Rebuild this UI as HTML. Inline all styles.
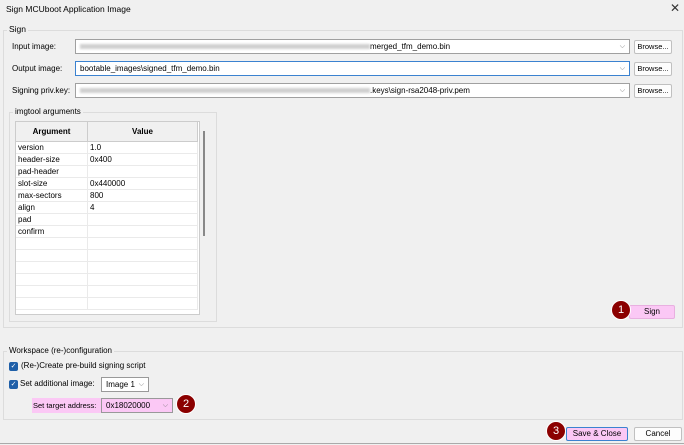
<!DOCTYPE html><html><head><style>
body{margin:0;width:684px;height:445px;background:#f0f0f0;font-family:"Liberation Sans",sans-serif;font-size:8px;color:#000;position:relative;overflow:hidden}
.a{position:absolute}
.box{position:absolute;border:1px solid #dcdcdc}
.lbl{position:absolute;background:#f0f0f0;padding:0 2px}
.field{position:absolute;background:#fff;border:1px solid #a0a0a0;height:13px;line-height:13px;padding-left:4px;white-space:nowrap;overflow:hidden;box-sizing:border-box;height:15px}
.blur{display:inline-block;height:5px;background:#d0d0d0;vertical-align:middle;filter:blur(1px)}
.btn{position:absolute;background:#fdfdfd;border:1px solid #c0c0c0;border-radius:2px;text-align:center;line-height:12px;height:12px;white-space:nowrap}
.dd{position:absolute;right:4px;top:0;color:#777;font-size:7px}
.circ{position:absolute;width:18px;height:18px;border-radius:50%;background:#8b0000;color:#fff;text-align:center;line-height:18px;font-size:11px;border:1px solid #fff}
table{border-collapse:collapse}
td{border:1px solid #eaeaea;height:11px;padding:0 2px;font-size:8px;line-height:11px}
.cb{position:absolute;width:9px;height:9px;background:#1f5fa8;border-radius:2px;color:#fff;font-size:7px;line-height:9px;text-align:center}
</style></head><body>
<div class="a" style="left:6px;top:4px;font-size:8.5px">Sign MCUboot Application Image</div>
<div class="a" style="left:670px;top:1px;font-size:12px;color:#333">✕</div>
<div class="box" style="left:3px;top:30px;width:678px;height:296px"></div>
<div class="lbl" style="left:7px;top:24px;font-size:8.5px">Sign</div>
<div class="a" style="left:12px;top:42px">Input image:</div>
<div class="a" style="left:12px;top:64px">Output image:</div>
<div class="a" style="left:12px;top:86px">Signing priv.key:</div>
<div class="field" style="left:75px;top:39px;width:555px"><span class="blur" style="width:290px"></span>merged_tfm_demo.bin<span class="dd">⌵</span></div>
<div class="field" style="left:75px;top:61px;width:555px;border-color:#3b82d0">bootable_images\signed_tfm_demo.bin<span class="dd">⌵</span></div>
<div class="field" style="left:75px;top:83px;width:555px"><span class="blur" style="width:290px"></span>.keys\sign-rsa2048-priv.pem<span class="dd">⌵</span></div>
<div class="btn" style="left:634px;top:40px;width:36px;font-size:7.5px">Browse...</div>
<div class="btn" style="left:634px;top:62px;width:36px;font-size:7.5px">Browse...</div>
<div class="btn" style="left:634px;top:84px;width:36px;font-size:7.5px">Browse...</div>
<div class="box" style="left:9px;top:112px;width:206px;height:208px"></div>
<div class="lbl" style="left:13px;top:107px">imgtool arguments</div>
<div class="a" style="left:15px;top:121px;width:183px;height:192px;background:#fff;border:1px solid #ccc;overflow:hidden">
<table style="width:183px;margin:-1px">
<tr><td style="width:67px;height:19px;background:#f0f0f0;border:1px solid #ccc;text-align:center;font-weight:bold">Argument</td><td style="background:#f0f0f0;border:1px solid #ccc;text-align:center;font-weight:bold">Value</td></tr>
<tr><td>version</td><td>1.0</td></tr><tr><td>header-size</td><td>0x400</td></tr><tr><td>pad-header</td><td></td></tr><tr><td>slot-size</td><td>0x440000</td></tr><tr><td>max-sectors</td><td>800</td></tr><tr><td>align</td><td>4</td></tr><tr><td>pad</td><td></td></tr><tr><td>confirm</td><td></td></tr>
<tr><td></td><td></td></tr><tr><td></td><td></td></tr><tr><td></td><td></td></tr><tr><td></td><td></td></tr><tr><td></td><td></td></tr><tr><td></td><td></td></tr>
</table></div>
<div class="a" style="left:203px;top:131px;width:2px;height:105px;background:#888"></div>
<div class="btn" style="left:629px;top:305px;width:44px;background:#fbc8f5;border-color:#e8b0e0">Sign</div>
<div class="circ" style="left:611px;top:300px">1</div>
<div class="box" style="left:3px;top:351px;width:678px;height:67px"></div>
<div class="lbl" style="left:7px;top:346px">Workspace (re-)configuration</div>
<div class="cb" style="left:9px;top:362px">✓</div>
<div class="a" style="left:21px;top:361px">(Re-)Create pre-build signing script</div>
<div class="cb" style="left:9px;top:380px">✓</div>
<div class="a" style="left:20px;top:379px">Set additional image:</div>
<div class="field" style="left:101px;top:377px;width:48px;border-color:#999">Image 1<span class="dd">⌵</span></div>
<div class="a" style="left:32px;top:398px;width:141px;height:15px;background:#fbc8f5"></div>
<div class="a" style="left:33px;top:401px;font-size:7.5px">Set target address:</div>
<div class="field" style="left:101px;top:398px;width:72px;background:#fbc8f5;border-color:#999">0x18020000<span class="dd">⌵</span></div>
<div class="circ" style="left:176px;top:394px">2</div>
<div class="a" style="left:0;top:443px;width:684px;height:1px;background:#aaa"></div>
<div class="btn" style="left:566px;top:427px;width:60px;background:#fbc8f5;border-color:#3b82d0">Save &amp; Close</div>
<div class="btn" style="left:634px;top:427px;width:46px">Cancel</div>
<div class="circ" style="left:546px;top:421px">3</div>
</body></html>
